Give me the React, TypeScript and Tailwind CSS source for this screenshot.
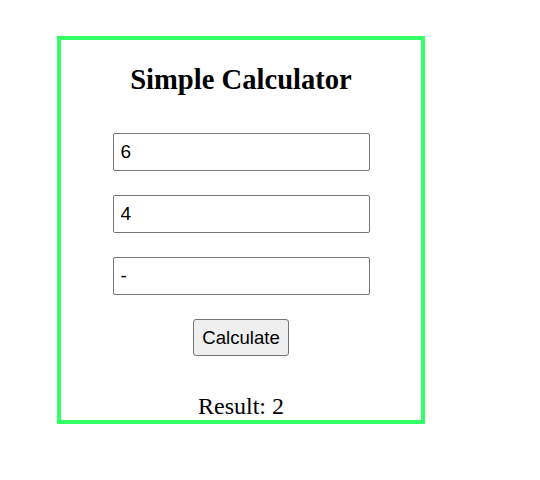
import React, { useState } from "react";

export default function App() {
  const [a, setA] = useState("6");
  const [b, setB] = useState("4");
  const [op, setOp] = useState("-");
  const [result, setResult] = useState<string>("2");

  const calculate = () => {
    const x = parseFloat(a);
    const y = parseFloat(b);
    let r: number;
    if (op === "+") r = x + y;
    else if (op === "-") r = x - y;
    else if (op === "*") r = x * y;
    else if (op === "/") r = x / y;
    else r = NaN;
    setResult(String(r));
  };

  const inputCls =
    "w-[257px] h-[38px] border border-[#767676] rounded-[2px] pl-[7px] text-[19px] text-black bg-white outline-none";

  return (
    <div className="w-[540px] h-[480px] bg-white">
      <div className="ml-[57px] pt-[36px]">
        <div className="w-[368px] border-4 border-[#33ff66] flex flex-col items-center pt-[23px]">
          <h2
            className="text-[28.6px] font-bold leading-[34px] text-black"
            style={{ fontFamily: "'Liberation Serif', serif" }}
          >
            Simple Calculator
          </h2>
          <div
            className="mt-[36px] flex flex-col items-center gap-6"
            style={{ fontFamily: "'Liberation Sans', Arial, sans-serif" }}
          >
            <input className={inputCls} value={a} onChange={(e) => setA(e.target.value)} />
            <input className={inputCls} value={b} onChange={(e) => setB(e.target.value)} />
            <input className={inputCls} value={op} onChange={(e) => setOp(e.target.value)} />
            <button
              onClick={calculate}
              className="h-[37px] px-[8px] border border-[#767676] rounded-[3px] bg-[#efefef] text-[18.6px] text-black"
            >
              Calculate
            </button>
          </div>
          <p
            className="mt-[36px] text-[24px] leading-[28px] text-black"
            style={{ fontFamily: "'Liberation Serif', serif" }}
          >
            Result: {result}
          </p>
        </div>
      </div>
    </div>
  );
}
